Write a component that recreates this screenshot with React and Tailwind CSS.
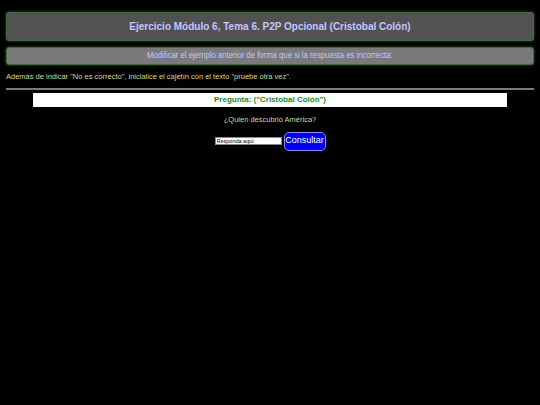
import React from "react";

export default function App() {
  return (
    <div
      className="min-h-[405px] w-[540px] bg-black px-[6px] pt-[12px]"
      style={{ fontFamily: '"Liberation Sans", Arial, sans-serif' }}
    >
      <div className="flex h-[29px] items-center justify-center rounded-[3px] border border-[#3d6b3d] bg-[#525252] shadow-[0_0_3px_#2f5f2f]">
        <h1 className="text-[10px] font-bold text-[#c4c4ff]">
          Ejercicio Módulo 6, Tema 6. P2P Opcional (Cristobal Colón)
        </h1>
      </div>
      <div className="mt-[6px] flex h-[18px] items-center justify-center rounded-[3px] border border-[#3d6b3d] bg-[#7a7a7a] shadow-[0_0_3px_#2f5f2f]">
        <p className="scale-x-[0.86] whitespace-nowrap text-[9px] text-[#c4c4ff]">
          Modificar el ejemplo anterior de forma que si la respuesta es incorrecta:
        </p>
      </div>
      <p className="mt-[6px] text-[7.5px] text-[#d2d89a]">
        Además de indicar "No es correcto", inicialice el cajetín con el texto "pruebe otra vez".
      </p>
      <hr className="mt-[6px] border-t-2 border-[#7a7a7a]" />
      <div className="mx-[27px] mt-[3px] flex h-[14px] items-center justify-center bg-white">
        <span className="text-[8px] font-bold text-[#238a23]">Pregunta: ("Cristobal Colón")</span>
      </div>
      <p className="mt-[7px] text-center text-[7.5px] text-[#d2d89a]">¿Quien descubrió América?</p>
      <div className="mt-[6px] flex items-center justify-center gap-[2px]">
        <input
          readOnly
          value="Responda aquí"
          className="h-[8px] w-[67px] border border-[#888] bg-white px-[1px] text-[5.5px] text-black outline-none"
        />
        <button className="h-[19px] w-[42px] rounded-[5px] border border-[#8a8aff] bg-[#0000ee] text-[9px] text-white">
          Consultar
        </button>
      </div>
    </div>
  );
}
